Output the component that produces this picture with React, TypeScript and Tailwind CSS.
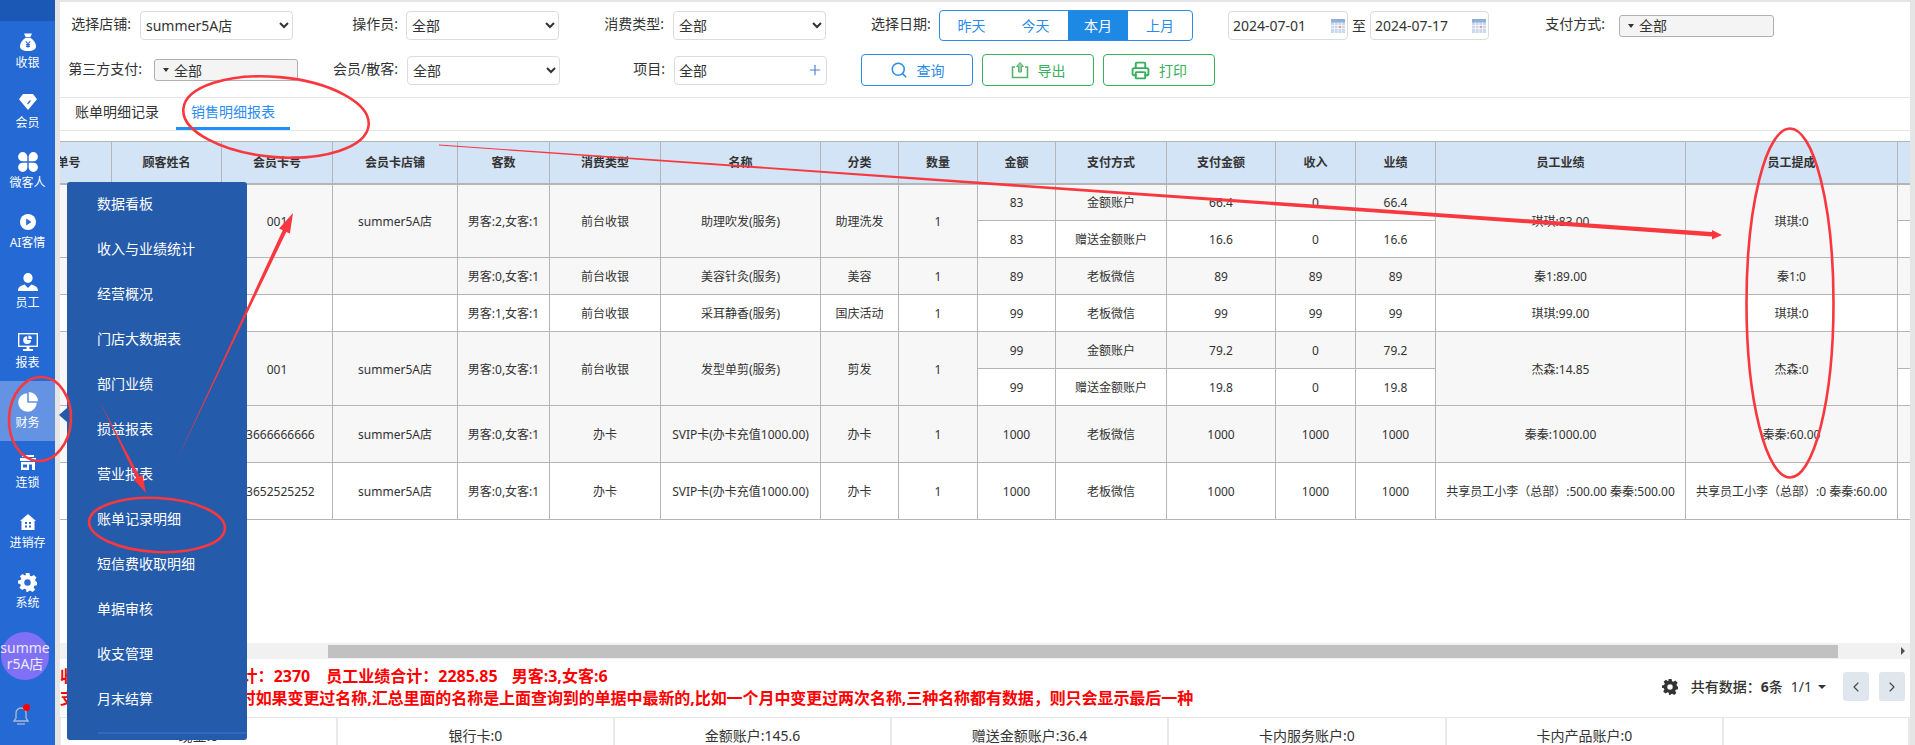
import React from "react";
import { Search, Printer, Plus, ChevronLeft, ChevronRight } from "lucide-react";

const Bag = () => (
  <svg viewBox="0 0 16 18" className="w-[16px] h-[18px]">
    <path fill="#fff" d="M4 0.5h8l-1.6 3.4h-4.8zM5.6 4.8h4.8C13.5 7 16 10 16 13c0 3.4-2.6 5-8 5s-8-1.6-8-5c0-3 2.5-6 5.6-8.2z" />
    <path stroke="#2b6bd3" strokeWidth="1.1" fill="none" d="M5.8 8.3L8 11l2.2-2.7M8 11v3.8M6 11.6h4M6 13.4h4" />
  </svg>
);
const Diamond = () => (
  <svg viewBox="0 0 18 16" className="w-[18px] h-[16px]">
    <path fill="#fff" d="M4 0h10l4 5.2L9 16 0 5.2z" />
    <path stroke="#2b6bd3" strokeWidth="1.2" fill="none" d="M11.5 6.5L8.5 10" />
  </svg>
);
const Clover = () => (
  <svg viewBox="0 0 20 20" className="w-[20px] h-[20px]" fill="#fff">
    <path d="M9.3 9.3H4.6a4.6 4.6 0 1 1 4.7-4.7z" />
    <path d="M10.7 9.3h4.7a4.6 4.6 0 1 0-4.7-4.7z" />
    <path d="M9.3 10.7H4.6a4.6 4.6 0 1 0 4.7 4.7z" />
    <path d="M10.7 10.7h4.7a4.6 4.6 0 1 1-4.7 4.7z" />
  </svg>
);
const Play = () => (
  <svg viewBox="0 0 16 16" className="w-[16px] h-[16px]">
    <circle cx="8" cy="8" r="8" fill="#fff" />
    <path fill="#2b6bd3" d="M6.2 4.6L11.4 8l-5.2 3.4z" />
  </svg>
);
const Staff = () => (
  <svg viewBox="0 0 20 18" className="w-[20px] h-[18px]" fill="#fff">
    <ellipse cx="10" cy="5" rx="4.6" ry="5" />
    <path d="M0 18c0-3.6 2.6-5.4 6.6-6.4L10 15l3.4-3.4c4 1 6.6 2.8 6.6 6.4z" />
  </svg>
);
const Monitor = () => (
  <svg viewBox="0 0 20 18" className="w-[20px] h-[18px]">
    <rect x="0.7" y="0.7" width="18.6" height="12.6" fill="none" stroke="#fff" strokeWidth="1.4" />
    <path fill="#fff" d="M9.2 3.2v3.8h3.8A3.9 3.9 0 1 1 9.2 3.2zM10.4 2.4a3.8 3.8 0 0 1 3.6 3.6h-3.6zM8.5 14h3v2h-3zM5 16h10v2H5z" />
  </svg>
);
const Pie = () => (
  <svg viewBox="0 0 20 20" className="w-[20px] h-[20px]" fill="#fff">
    <path d="M9.2 1.2v9.6h9.6A9.3 9.3 0 1 1 9.2 1.2z" />
    <path d="M10.8 0a9.2 9.2 0 0 1 9.2 9.2h-9.2z" />
  </svg>
);
const Store = () => (
  <svg viewBox="0 0 16 15" className="w-[16px] h-[15px]" fill="#fff">
    <path d="M2 0h12v2H2zM0 3h16v3H0zM1 7h14v8h-3V9.5H9V15H1zM3 9.5v3h4v-3z" fillRule="evenodd" />
  </svg>
);
const House = () => (
  <svg viewBox="0 0 16 16" className="w-[16px] h-[16px]">
    <path fill="#fff" d="M8 0l8 7h-1.5v9h-13V7H0z" />
    <rect x="5" y="8" width="2" height="2" fill="#2b6bd3" />
    <rect x="9" y="8" width="2" height="2" fill="#2b6bd3" />
    <rect x="5" y="11.5" width="2" height="2" fill="#2b6bd3" />
    <rect x="9" y="11.5" width="2" height="2" fill="#2b6bd3" />
  </svg>
);
const Gear = ({ fill = "#fff", cut = "#2b6bd3", size = "w-[19px] h-[19px]" }: { fill?: string; cut?: string; size?: string }) => (
  <svg viewBox="0 0 20 20" className={size}>
    <path fill={fill} d="M8 0h4l.6 2.8 1.7.7L16.7 2l2.8 2.8-1.5 2.4.7 1.7L20 9.6v3.2l-2.8.6-.7 1.7 1.5 2.4-2.8 2.4-2.4-1.5-1.7.6L10.6 20H9l-.6-2.8-1.7-.7-2.4 1.5L1.5 15.6 3 13.2l-.7-1.7L0 11V8l2.8-.6.7-1.7L2 3.3 4.8 1l2.4 1.5 1.1-.5z" />
    <circle cx="10" cy="10" r="3.4" fill={cut} />
  </svg>
);
const Bell = () => (
  <svg viewBox="0 0 16 18" className="w-[16px] h-[18px]" fill="none" stroke="#a9bbd2" strokeWidth="1.3">
    <path d="M8 1a5 5 0 0 0-5 5v5L1 14h14l-2-3V6a5 5 0 0 0-5-5z" />
    <path d="M4 17h8" />
  </svg>
);

const navItems: { label: string; icon: React.ReactNode; active?: boolean }[] = [
  { label: "收银", icon: <Bag /> },
  { label: "会员", icon: <Diamond /> },
  { label: "微客人", icon: <Clover /> },
  { label: "AI客情", icon: <Play /> },
  { label: "员工", icon: <Staff /> },
  { label: "报表", icon: <Monitor /> },
  { label: "财务", icon: <Pie />, active: true },
  { label: "连锁", icon: <Store /> },
  { label: "进销存", icon: <House /> },
  { label: "系统", icon: <Gear /> },
];

const menuItems = ["数据看板", "收入与业绩统计", "经营概况", "门店大数据表", "部门业绩", "损益报表", "营业报表", "账单记录明细", "短信费收取明细", "单据审核", "收支管理", "月末结算"];

const Label = ({ children, w }: { children: React.ReactNode; w: string }) => (
  <span className={`${w} shrink-0 whitespace-nowrap text-right text-[14px] leading-[20px] mb-[3px] text-[#333]`}>{children}</span>
);

const Sel = ({ value, ml }: { value: string; ml: string }) => (
  <select defaultValue={value} className={`${ml} w-[153px] h-[29px] shrink-0 rounded-[4px] border border-[#dcdcdc] bg-white pl-[1px] text-[14px] text-[#333]`}>
    <option>{value}</option>
  </select>
);

const Drop = ({ cls }: { cls: string }) => (
  <div className={`${cls} h-[22px] shrink-0 rounded-[3px] border border-[#b0b0b0] bg-[#f4f4f4] flex items-center pl-[8px] text-[14px] text-[#333]`}>
    <span className="w-0 h-0 border-l-[3.5px] border-r-[3.5px] border-t-[4px] border-l-transparent border-r-transparent border-t-[#333] mr-[5px]" />
    全部
  </div>
);

const Cal = () => (
  <svg viewBox="0 0 14 14" className="w-[14px] h-[14px] shrink-0">
    <rect width="14" height="14" fill="#cbd7ea" />
    <rect width="14" height="3.5" fill="#8fb0da" />
    <path stroke="#fff" strokeWidth="0.7" d="M0 6.5h14M0 9.5h14M3.5 3.5V14M7 3.5V14M10.5 3.5V14" />
    <rect x="8" y="7" width="2" height="2" fill="#e39a9a" />
  </svg>
);

const DateBox = ({ value, cls }: { value: string; cls: string }) => (
  <div className={`${cls} h-[29px] shrink-0 rounded-[4px] border border-[#dcdcdc] bg-white flex items-center justify-between pl-[4px] pr-[2px] text-[14px] text-[#333]`}>
    {value}
    <Cal />
  </div>
);

const td = "border border-[#b5b5b5] text-center align-middle px-0 pt-[2px] pb-0 whitespace-nowrap";
const gray = "bg-[#f7f7f7]";

const Cell = ({ children, rs, cls = gray }: { children?: React.ReactNode; rs?: number; cls?: string }) => (
  <td rowSpan={rs} className={`${td} ${cls}`}>{children}</td>
);

const head = ["单号", "顾客姓名", "会员卡号", "会员卡店铺", "客数", "消费类型", "名称", "分类", "数量", "金额", "支付方式", "支付金额", "收入", "业绩", "员工业绩", "员工提成", ""];

const Double = ({ card, guests, name, cat, a, b, perf, comm }: { card: string; guests: string; name: string; cat: string; a: string[]; b: string[]; perf: string; comm: string }) => (
  <>
    <tr className="h-[37px]">
      <Cell rs={2} /><Cell rs={2} />
      <Cell rs={2}>{card}</Cell>
      <Cell rs={2}>summer5A店</Cell>
      <Cell rs={2}>{guests}</Cell>
      <Cell rs={2}>前台收银</Cell>
      <Cell rs={2}>{name}</Cell>
      <Cell rs={2}>{cat}</Cell>
      <Cell rs={2}>1</Cell>
      {a.map((v, i) => <Cell key={i}>{v}</Cell>)}
      <Cell rs={2}>{perf}</Cell>
      <Cell rs={2}>{comm}</Cell>
      <Cell />
    </tr>
    <tr className="h-[37px]">
      {b.map((v, i) => <Cell key={i} cls="bg-white">{v}</Cell>)}
      <Cell cls="bg-white" />
    </tr>
  </>
);

const Single = ({ cls, h, values }: { cls: string; h: string; values: string[] }) => (
  <tr className={h}>
    {values.map((v, i) => <Cell key={i} cls={cls}>{v}</Cell>)}
  </tr>
);

const accounts = ["现金:0", "银行卡:0", "金额账户:145.6", "赠送金额账户:36.4", "卡内服务账户:0", "卡内产品账户:0", ""];

export default function App() {
  return (
    <div className="relative w-[1915px] h-[745px] overflow-hidden flex bg-[#e5e5e5] font-['Noto_Sans','Noto_Sans_CJK_SC',sans-serif] text-[#333]">
      {/* sidebar */}
      <aside className="w-[55px] h-full shrink-0 bg-[#2469d4] flex flex-col text-white">
        <div className="h-[21px] bg-[#1b57b5] shrink-0" />
        {navItems.map((n) => (
          <div key={n.label} className={`h-[60px] shrink-0 flex flex-col items-center pt-[11px] ${n.active ? "bg-[#6393e2]" : ""}`}>
            <div className="h-[20px] flex items-center justify-center">{n.icon}</div>
            <div className="h-[20px] pt-[1px] leading-[20px] text-[12px] whitespace-nowrap">{n.label}</div>
          </div>
        ))}
        <div className="mt-[11px] ml-[1px] w-[48px] h-[48px] shrink-0 rounded-full bg-[#7f70f5] flex flex-col items-center justify-center text-[14px] leading-[16px] text-[#ece8ff]">
          <span>summe</span>
          <span>r5A店</span>
        </div>
        <div className="relative mt-[27px] ml-[13px] w-[16px] h-[18px]">
          <Bell />
          <span className="absolute -top-[3px] left-[10px] w-[7px] h-[7px] rounded-full bg-[#ff0000]" />
        </div>
      </aside>

      {/* main */}
      <main className="ml-[5px] mt-[2px] w-[1850px] h-[743px] shrink-0 bg-white flex flex-col">
        {/* filters */}
        <div className="pt-[8px] pb-[11px] border-b border-[#e6e6e6] shrink-0">
          <div className="flex items-center h-[31px] pl-[11px]">
            <Label w="w-[60px]">选择店铺:</Label>
            <Sel value="summer5A店" ml="ml-[9px]" />
            <span className="ml-[59px]" />
            <Label w="w-[46px]">操作员:</Label>
            <Sel value="全部" ml="ml-[8px]" />
            <span className="ml-[45px]" />
            <Label w="w-[60px]">消费类型:</Label>
            <Sel value="全部" ml="ml-[9px]" />
            <span className="ml-[45px]" />
            <Label w="w-[59px]">选择日期:</Label>
            <div className="ml-[9px] w-[254px] h-[31px] shrink-0 rounded-[4px] border border-[#2a8bea] flex text-[14px] text-[#2a8bea] overflow-hidden">
              <div className="w-[63px] flex items-center justify-center">昨天</div>
              <div className="w-[65px] flex items-center justify-center">今天</div>
              <div className="w-[60px] flex items-center justify-center bg-[#1e88e5] text-white">本月</div>
              <div className="flex-1 flex items-center justify-center">上月</div>
            </div>
            <DateBox value="2024-07-01" cls="ml-[35px] w-[120px]" />
            <span className="w-[22px] text-center text-[14px] shrink-0">至</span>
            <DateBox value="2024-07-17" cls="w-[119px]" />
            <span className="ml-[56px]" />
            <Label w="w-[60px]">支付方式:</Label>
            <Drop cls="ml-[14px] w-[155px]" />
          </div>
          <div className="flex items-center h-[32px] mt-[13px] pl-[6px]">
            <Label w="w-[76px]">第三方支付:</Label>
            <Drop cls="ml-[12px] w-[144px]" />
            <span className="ml-[34px]" />
            <Label w="w-[66px]">会员/散客:</Label>
            <Sel value="全部" ml="ml-[9px]" />
            <span className="ml-[73px]" />
            <Label w="w-[32px]">项目:</Label>
            <div className="ml-[9px] w-[153px] h-[29px] shrink-0 rounded-[4px] border border-[#dcdcdc] flex items-center justify-between pl-[4px] pr-[3px] text-[14px]">
              全部
              <Plus className="w-[16px] h-[16px] text-[#4f86d9]" strokeWidth={1.8} />
            </div>
            <button className="ml-[34px] w-[112px] h-[32px] rounded-[4px] border border-[#2a8bea] flex items-center justify-center gap-[9px] text-[14px] text-[#2a8bea]">
              <Search className="w-[18px] h-[18px]" strokeWidth={2} />查询
            </button>
            <button className="ml-[9px] w-[112px] h-[32px] rounded-[4px] border border-[#35b05b] flex items-center justify-center gap-[9px] text-[14px] text-[#35b05b]">
              <svg viewBox="0 0 18 18" className="w-[18px] h-[18px]" fill="none" stroke="#52b36a" strokeWidth="1.6">
                <path d="M4 6H1.5v10.5h15V6H14" />
                <path fill="#9cc9a8" strokeWidth="1" d="M9 1.5L12.5 5.5H10.5V11H7.5V5.5H5.5z" />
              </svg>
              导出
            </button>
            <button className="ml-[9px] w-[112px] h-[32px] rounded-[4px] border border-[#35b05b] flex items-center justify-center gap-[9px] text-[14px] text-[#35b05b]">
              <Printer className="w-[19px] h-[19px]" strokeWidth={2.4} />打印
            </button>
          </div>
        </div>

        {/* tabs */}
        <div className="h-[33px] shrink-0 border-b border-[#e6e6e6] flex text-[14px]">
          <div className="w-[114px] h-[32px] leading-[28px] text-center text-[#333]">账单明细记录</div>
          <div className="ml-[2px] w-[114px] h-[32px] leading-[28px] text-center text-[#2a8cf0] border-b-[3px] border-[#1e8fff]">销售明细报表</div>
        </div>

        {/* table */}
        <div className="mt-[10px] h-[502px] shrink-0 overflow-hidden">
          <table className="-ml-[35px] w-[1972px] table-fixed border-collapse text-[12px] text-[#333]">
            <colgroup>
              <col className="w-[86px]" /><col className="w-[110px]" /><col className="w-[111px]" /><col className="w-[125px]" /><col className="w-[92px]" /><col className="w-[111px]" /><col className="w-[160px]" /><col className="w-[78px]" /><col className="w-[79px]" /><col className="w-[78px]" /><col className="w-[111px]" /><col className="w-[109px]" /><col className="w-[80px]" /><col className="w-[80px]" /><col className="w-[250px]" /><col className="w-[212px]" /><col className="w-[100px]" />
            </colgroup>
            <thead>
              <tr className="h-[42px]">
                {head.map((h, i) => (
                  <th key={i} className="border border-[#b5b5b5] border-b-[2px] bg-[#d3e4f6] text-center font-bold px-0 pt-[2px] pb-0">{h}</th>
                ))}
              </tr>
            </thead>
            <tbody>
              <Double card="001" guests="男客:2,女客:1" name="助理吹发(服务)" cat="助理洗发" a={["83", "金额账户", "66.4", "0", "66.4"]} b={["83", "赠送金额账户", "16.6", "0", "16.6"]} perf="琪琪:83.00" comm="琪琪:0" />
              <Single cls={gray} h="h-[37px]" values={["", "", "", "", "男客:0,女客:1", "前台收银", "美容针灸(服务)", "美容", "1", "89", "老板微信", "89", "89", "89", "秦1:89.00", "秦1:0", ""]} />
              <Single cls="bg-white" h="h-[37px]" values={["", "", "", "", "男客:1,女客:1", "前台收银", "采耳静香(服务)", "国庆活动", "1", "99", "老板微信", "99", "99", "99", "琪琪:99.00", "琪琪:0", ""]} />
              <Double card="001" guests="男客:0,女客:1" name="发型单剪(服务)" cat="剪发" a={["99", "金额账户", "79.2", "0", "79.2"]} b={["99", "赠送金额账户", "19.8", "0", "19.8"]} perf="杰森:14.85" comm="杰森:0" />
              <Single cls={gray} h="h-[57px]" values={["", "", "13666666666", "summer5A店", "男客:0,女客:1", "办卡", "SVIP卡(办卡充值1000.00)", "办卡", "1", "1000", "老板微信", "1000", "1000", "1000", "秦秦:1000.00", "秦秦:60.00", ""]} />
              <Single cls="bg-white" h="h-[57px]" values={["", "", "13652525252", "summer5A店", "男客:0,女客:1", "办卡", "SVIP卡(办卡充值1000.00)", "办卡", "1", "1000", "老板微信", "1000", "1000", "1000", "共享员工小李（总部）:500.00 秦秦:500.00", "共享员工小李（总部）:0 秦秦:60.00", ""]} />
            </tbody>
          </table>
        </div>

        {/* scrollbar */}
        <div className="relative h-[16px] shrink-0 bg-[#f1f1f1] flex items-center">
          <div className="ml-[268px] w-[1510px] h-[13px] bg-[#c1c1c1]" />
          <span className="absolute right-[5px] top-[4px] w-0 h-0 border-y-[4px] border-l-[4px] border-y-transparent border-l-[#505050]" />
        </div>

        {/* summary */}
        <div className="h-[58px] shrink-0 flex justify-between">
          <div className="pt-[6px] text-[16px] leading-[22px] font-bold text-[#ff0000] whitespace-nowrap">
            <div>
              收入合计：2370<span className="ml-[17px]">业绩合计：</span>2370<span className="ml-[16px]">员工业绩合计：</span>2285.85<span className="ml-[14px]">男客:3,女客:6</span>
            </div>
            <div className="tracking-[-0.07px]">支付方式,项目分类的汇总时如果变更过名称,汇总里面的名称是上面查询到的单据中最新的,比如一个月中变更过两次名称,三种名称都有数据，则只会显示最后一种</div>
          </div>
          <div className="pt-[13px] pr-[5px] flex items-start text-[14px] font-medium">
            <div className="h-[29px] flex items-center">
              <Gear fill="#333" cut="#fff" size="w-[16px] h-[16px]" />
              <span className="ml-[13px]">共有数据：</span>
              <span className="font-bold">6</span>
              <span>条</span>
              <span className="ml-[8px] font-normal">1/1</span>
              <span className="ml-[6px] w-0 h-0 border-x-[4px] border-t-[4px] border-x-transparent border-t-[#333]" />
            </div>
            <div className="ml-[17px] w-[26px] h-[29px] rounded-[3px] bg-[#e0e6ee] flex items-center justify-center">
              <ChevronLeft className="w-[16px] h-[16px] text-[#444]" strokeWidth={1.6} />
            </div>
            <div className="ml-[10px] w-[26px] h-[29px] rounded-[3px] bg-[#e0e6ee] flex items-center justify-center">
              <ChevronRight className="w-[16px] h-[16px] text-[#444]" strokeWidth={1.6} />
            </div>
          </div>
        </div>

        {/* accounts */}
        <div className="h-[28px] shrink-0 border-t border-[#e6e6e6] grid grid-cols-[278px_277px_277px_277px_278px_277px_186px] text-[14px] text-[#333]">
          {accounts.map((a, i) => (
            <div key={i} className={`flex items-center justify-center pt-[7px] border-r-2 border-[#e9e9e9] whitespace-nowrap ${i === 0 ? "border-l" : ""} ${i === 6 ? "border-r-0" : ""}`}>{a}</div>
          ))}
        </div>
      </main>

      {/* flyout menu */}
      <div className="absolute left-[67px] top-[182px] w-[180px] h-[558px] rounded-[3px] bg-[#255bab] text-[14px] text-white">
        <span className="absolute -left-[8px] top-[226px] w-0 h-0 border-y-[7px] border-r-[8px] border-y-transparent border-r-[#255bab]" />
        <div className="flex flex-col pl-[30px]">
          {menuItems.map((m) => (
            <div key={m} className="h-[45px] leading-[43px] whitespace-nowrap">{m}</div>
          ))}
        </div>
        <div className="absolute left-[31px] right-0 top-[550px] h-[2px] bg-[#3069bd]" />
      </div>

      {/* hand-drawn annotations */}
      <svg className="absolute left-0 top-0 w-[1915px] h-[745px] pointer-events-none" viewBox="0 0 1915 745" fill="none" stroke="#f8383e" strokeWidth="2.6">
        <ellipse cx="276" cy="117" rx="93" ry="40" transform="rotate(5 276 117)" />
        <ellipse cx="1790" cy="303" rx="43.5" ry="174.5" />
        <ellipse cx="40" cy="419" rx="31" ry="42" transform="rotate(3 40 419)" />
        <ellipse cx="157" cy="525" rx="68" ry="27" transform="rotate(3 157 525)" />
        <path stroke="none" fill="#f8383e" d="M439 144.5L1712 232V230L1722 235L1712 239.5V236.5L439 145.5z" />
        <path stroke="none" fill="#f8383e" d="M176 462L282.7 230.2L279.1 228.4L293 213L289.9 233.6L286.3 231.9z" />
        <path stroke="none" fill="#f8383e" d="M100 402L139.5 476.2L142.4 474.7L146 493L133.4 479.3L136.3 477.8z" />
      </svg>
    </div>
  );
}
